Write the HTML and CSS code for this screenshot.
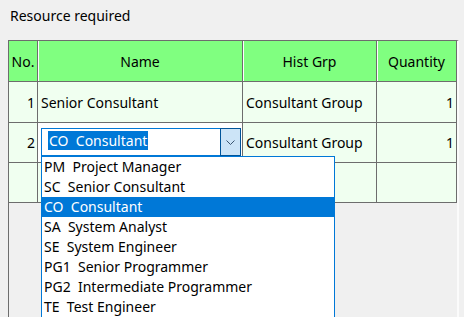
FILE: index.html
```html
<!DOCTYPE html>
<html lang="en">
<head>
    <meta charset="utf-8"/>
    <title>Resource required</title>
    <link rel="stylesheet" href="styles.css">
</head>
<body>
    <div class="caption">Resource required</div>
    <div class="grid">
        <div class="row head">
            <div class="cell no">No.</div>
            <div class="cell name">Name</div>
            <div class="cell grp">Hist Grp</div>
            <div class="cell qty">Quantity</div>
        </div>
        <div class="row r1">
            <div class="cell no">1</div>
            <div class="cell name">Senior Consultant</div>
            <div class="cell grp">Consultant Group</div>
            <div class="cell qty">1</div>
        </div>
        <div class="row r2">
            <div class="cell no">2</div>
            <div class="cell name edit">
                <div class="combo">
                    <span class="combo-text"><span class="sel">CO&nbsp; Consultant</span></span>
                    <span class="combo-btn">
                        <svg width="9" height="5" viewBox="0 0 9 5"><polyline points="0.5,0.5 4.5,4.5 8.5,0.5" fill="none" stroke="#3a5570" stroke-width="1"/></svg>
                    </span>
                    <ul class="droplist">
                        <li>PM&nbsp; Project Manager</li>
                        <li>SC&nbsp; Senior Consultant</li>
                        <li class="on">CO&nbsp; Consultant</li>
                        <li>SA&nbsp; System Analyst</li>
                        <li>SE&nbsp; System Engineer</li>
                        <li>PG1&nbsp; Senior Programmer</li>
                        <li>PG2&nbsp; Intermediate Programmer</li>
                        <li>TE&nbsp; Test Engineer</li>
                    </ul>
                </div>
            </div>
            <div class="cell grp">Consultant Group</div>
            <div class="cell qty">1</div>
        </div>
        <div class="row r3">
            <div class="cell no"></div>
            <div class="cell name"></div>
            <div class="cell grp"></div>
            <div class="cell qty"></div>
        </div>
    </div>
</body>
</html>
```

FILE: styles.css
```css
* {
    font-family: "Noto Sans", sans-serif;
    box-sizing: border-box;
}
html, body {
    overflow: hidden;
}
body {
    margin: 0;
    background: #f0f0f0;
    color: #000;
    font-size: 14px;
}
.caption {
    height: 40px;
    padding: 6px 0 0 10px;
    line-height: 20px;
}
.grid {
    margin-left: 8px;
    width: 451px;
    height: 277px;
    border-left: 1px solid #6d6d6d;
    border-top: 1px solid #6d6d6d;
    border-right: 2px solid #fbfbfb;
}
.row {
    display: grid;
    grid-template-columns: 29px 205px 134px 80px;
    height: 40px;
}
.row.head,
.row.r1 {
    height: 41px;
}
.cell {
    display: flex;
    align-items: center;
    border-right: 1px solid #6d6d6d;
    border-bottom: 1px solid #6d6d6d;
    background: #f0fff0;
    padding: 0 3px;
    white-space: nowrap;
}
.head .cell {
    background: #80ff80;
    justify-content: center;
    padding: 0;
}
.head .cell + .cell {
    box-shadow: inset 1px 0 0 #ffffff;
}
.cell.no,
.cell.qty {
    justify-content: flex-end;
    padding-right: 2px;
}
.head .cell.no,
.head .cell.qty {
    justify-content: center;
    padding: 0;
}
.cell.edit {
    align-items: flex-start;
    padding: 5px 1px 0 3px;
    background: #ffffff;
}
.combo {
    position: relative;
    display: flex;
    width: 200px;
    height: 28px;
    border: 1px solid #0078d7;
    background: #ffffff;
}
.combo-text {
    flex: 1;
    padding: 2px 0 0 6px;
}
.combo .sel {
    display: inline-block;
    background: #0078d7;
    color: #ffffff;
    line-height: 19px;
    height: 19px;
    padding: 0 1px;
}
.combo-btn {
    width: 21px;
    margin: -1px -1px -1px 0;
    display: flex;
    align-items: center;
    justify-content: center;
    background: #cce4f7;
    border: 1px solid #005499;
}
.droplist {
    position: absolute;
    left: -1px;
    top: calc(100% + 1px);
    width: 294px;
    margin: 0;
    padding: 0;
    list-style: none;
    background: #ffffff;
    border: 1px solid #0078d7;
    border-bottom: 0;
    z-index: 2;
}
.droplist li {
    height: 20px;
    line-height: 20px;
    padding-left: 2px;
}
.droplist li.on {
    background: #0078d7;
    color: #ffffff;
}
```
